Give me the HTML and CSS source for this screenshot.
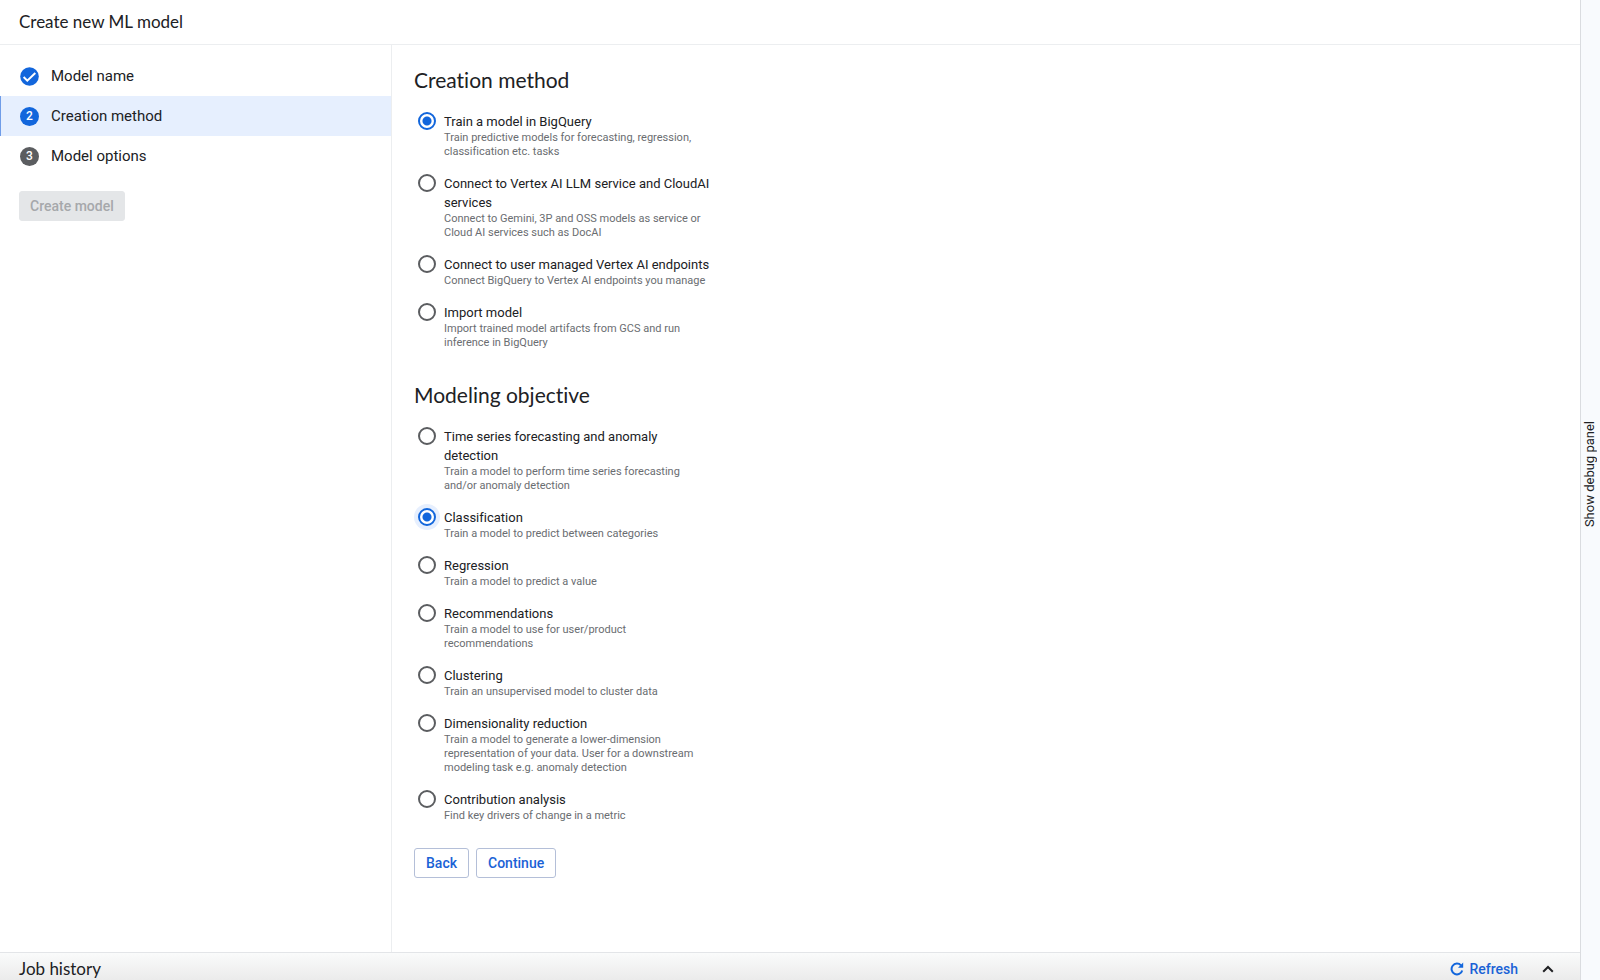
FILE: index.html
```
<!DOCTYPE html>
<html lang="en">
<head>
  <meta charset="utf-8">
  <title>Create new ML model</title>
  <link rel="stylesheet" href="styles.css">
</head>
<body>
  <div class="workspace">
    <header class="header">
      <h1 class="header-title">Create new ML model</h1>
    </header>

    <div class="content">
      <nav class="sidebar">
        <ol class="steps">
          <li class="step">
            <svg class="step-icon" viewBox="0 0 19 19" aria-hidden="true">
              <circle cx="9.5" cy="9.5" r="9.3" fill="#1266dc"/>
              <path d="M3.6 10l3.7 3.6 8-7.6" fill="none" stroke="#fff" stroke-width="2"/>
            </svg>
            <a class="step-link" href="#name">Model name</a>
          </li>
          <li class="step active">
            <span class="step-number">2</span>
            <a class="step-link" href="#method" aria-current="step">Creation method</a>
          </li>
          <li class="step">
            <span class="step-number pending">3</span>
            <a class="step-link" href="#options">Model options</a>
          </li>
        </ol>
        <button class="button create-button" type="button" disabled>Create model</button>
      </nav>

      <main class="main">
        <form class="form">
          <fieldset class="group">
            <legend class="group-title">Creation method</legend>
            <div class="option">
              <input class="radio" type="radio" name="method" id="train" checked>
              <label class="option-text" for="train">
                <span class="option-label">Train a model in BigQuery</span>
                <span class="option-description">Train predictive models for forecasting, regression, classification etc. tasks</span>
              </label>
            </div>
            <div class="option">
              <input class="radio" type="radio" name="method" id="llm">
              <label class="option-text" for="llm">
                <span class="option-label">Connect to Vertex AI LLM service and CloudAI services</span>
                <span class="option-description">Connect to Gemini, 3P and OSS models as service or Cloud AI services such as DocAI</span>
              </label>
            </div>
            <div class="option">
              <input class="radio" type="radio" name="method" id="endpoints">
              <label class="option-text" for="endpoints">
                <span class="option-label">Connect to user managed Vertex AI endpoints</span>
                <span class="option-description">Connect BigQuery to Vertex AI endpoints you manage</span>
              </label>
            </div>
            <div class="option">
              <input class="radio" type="radio" name="method" id="import">
              <label class="option-text" for="import">
                <span class="option-label">Import model</span>
                <span class="option-description">Import trained model artifacts from GCS and run inference in BigQuery</span>
              </label>
            </div>
          </fieldset>

          <fieldset class="group">
            <legend class="group-title">Modeling objective</legend>
            <div class="option">
              <input class="radio" type="radio" name="objective" id="forecasting">
              <label class="option-text" for="forecasting">
                <span class="option-label">Time series forecasting and anomaly detection</span>
                <span class="option-description">Train a model to perform time series forecasting and/or anomaly detection</span>
              </label>
            </div>
            <div class="option">
              <input class="radio focused" type="radio" name="objective" id="classification" checked>
              <label class="option-text" for="classification">
                <span class="option-label">Classification</span>
                <span class="option-description">Train a model to predict between categories</span>
              </label>
            </div>
            <div class="option">
              <input class="radio" type="radio" name="objective" id="regression">
              <label class="option-text" for="regression">
                <span class="option-label">Regression</span>
                <span class="option-description">Train a model to predict a value</span>
              </label>
            </div>
            <div class="option">
              <input class="radio" type="radio" name="objective" id="recommendations">
              <label class="option-text" for="recommendations">
                <span class="option-label">Recommendations</span>
                <span class="option-description">Train a model to use for user/product recommendations</span>
              </label>
            </div>
            <div class="option">
              <input class="radio" type="radio" name="objective" id="clustering">
              <label class="option-text" for="clustering">
                <span class="option-label">Clustering</span>
                <span class="option-description">Train an unsupervised model to cluster data</span>
              </label>
            </div>
            <div class="option">
              <input class="radio" type="radio" name="objective" id="reduction">
              <label class="option-text" for="reduction">
                <span class="option-label">Dimensionality reduction</span>
                <span class="option-description">Train a model to generate a lower-dimension representation of your data. User for a downstream modeling task e.g. anomaly detection</span>
              </label>
            </div>
            <div class="option">
              <input class="radio" type="radio" name="objective" id="contribution">
              <label class="option-text" for="contribution">
                <span class="option-label">Contribution analysis</span>
                <span class="option-description">Find key drivers of change in a metric</span>
              </label>
            </div>
          </fieldset>

          <div class="actions">
            <button class="button" type="button">Back</button>
            <button class="button" type="button">Continue</button>
          </div>
        </form>
      </main>
    </div>

    <footer class="footer">
      <h2 class="footer-title">Job history</h2>
      <button class="refresh" type="button">
        <svg class="refresh-icon" viewBox="0 0 14 14" aria-hidden="true">
          <path d="M11 3.4A5.4 5.4 0 1 0 12.2 8.4" fill="none" stroke="#1266dc" stroke-width="2"/>
          <path d="M13.2 .6v5.2H8z" fill="#1266dc"/>
        </svg>
        Refresh
      </button>
      <button class="expand" type="button" aria-label="Expand">
        <svg class="expand-icon" viewBox="0 0 12 8" aria-hidden="true">
          <path d="M1.2 6.8L6 2l4.8 4.8" fill="none" stroke="#202124" stroke-width="2"/>
        </svg>
      </button>
    </footer>
  </div>

  <aside class="rail">
    <button class="debug-button" type="button">Show debug panel</button>
  </aside>
</body>
</html>
```
FILE: styles.css
```
* {
  box-sizing: border-box;
}
body {
  margin: 0;
  height: 100vh;
  display: flex;
  overflow: hidden;
  font-family: Roboto, sans-serif;
  font-variant-ligatures: none;
  color: #202124;
  background-color: #fff;
}
button {
  font-family: Roboto, sans-serif;
}
.workspace {
  flex: 1;
  display: flex;
  flex-direction: column;
}
.header {
  padding: 10px 19px;
  border-bottom: 1px solid #eceef0;
}
.header-title {
  margin: 0;
  font-family: Lato, sans-serif;
  font-size: 17px;
  font-weight: 400;
  line-height: 24px;
}
.content {
  flex: 1;
  display: flex;
  min-height: 0;
}

/* steps */
.sidebar {
  width: 392px;
  padding-top: 11px;
  border-right: 1px solid #eceef0;
}
.steps {
  list-style: none;
  margin: 0;
  padding: 0;
}
.step {
  display: flex;
  align-items: center;
  gap: 12px;
  height: 40px;
  padding-left: 19px;
  border-left: 1px solid transparent;
}
.step.active {
  background-color: #e6effe;
  border-left-color: #6f9ce8;
}
.step-icon {
  width: 19px;
  height: 19px;
}
.step-number {
  width: 19px;
  height: 19px;
  border-radius: 50%;
  background-color: #1266dc;
  color: #fff;
  font-size: 12px;
  font-weight: 500;
  line-height: 19px;
  text-align: center;
}
.step-number.pending {
  background-color: #5b5d60;
}
.step-link {
  color: #202124;
  font-size: 15px;
  text-decoration: none;
}

/* buttons */
.button {
  height: 30px;
  padding: 0 11px;
  border: 1px solid #b4bfd8;
  border-radius: 3px;
  background-color: #fff;
  color: #1a62d6;
  font-size: 14px;
  font-weight: 500;
}
.create-button {
  margin: 15px 19px;
  padding: 0 10px;
  border-color: #e4e6e8;
  background-color: #e4e6e8;
  color: #a6a8ab;
}

/* form */
.main {
  flex: 1;
  padding: 21px 22px;
}
.group {
  margin: 0 0 10px;
  padding: 0;
  border: 0;
}
.group + .group {
  margin-top: 16px;
}
.group-title {
  margin-bottom: 18px;
  padding: 0;
  font-family: Lato, sans-serif;
  font-size: 21px;
  line-height: 28px;
}
.option {
  display: flex;
  gap: 8px;
  margin-bottom: 15px;
  padding-left: 4px;
}
.radio {
  appearance: none;
  width: 18px;
  height: 18px;
  margin: 0;
  border: 2px solid #5b5d60;
  border-radius: 50%;
}
.radio:checked {
  border-color: #1266dc;
  background: radial-gradient(#1266dc 4px, #fff 5px);
}
.radio.focused {
  box-shadow: 0 0 0 4px #e6effe;
}
.option-text {
  width: 266px;
}
.option-label {
  display: block;
  font-size: 13px;
  line-height: 19px;
}
.option-description {
  display: block;
  color: #6a6d71;
  font-size: 11px;
  line-height: 14px;
}
.actions {
  display: flex;
  gap: 7px;
}

/* job history */
.footer {
  display: flex;
  align-items: center;
  height: 28px;
  padding: 4px 18px 0 19px;
  border-top: 1px solid #e3e5e8;
  background: linear-gradient(#fafbfb, #ebebeb);
}
.footer-title {
  flex: 1;
  margin: 0;
  font-family: Lato, sans-serif;
  font-size: 17px;
  font-weight: 400;
  line-height: 24px;
}
.refresh {
  display: flex;
  align-items: center;
  gap: 5px;
  margin-right: 16px;
  padding: 0;
  border: 0;
  background: none;
  color: #1a62d6;
  font-size: 14px;
  font-weight: 500;
}
.refresh-icon {
  width: 14px;
  height: 14px;
}
.expand {
  display: flex;
  padding: 8px;
  border: 0;
  background: none;
}
.expand-icon {
  width: 12px;
  height: 8px;
}

/* debug rail */
.rail {
  display: flex;
  align-items: center;
  justify-content: center;
  width: 20px;
  padding: 0 3px 32px 0;
  border-left: 1px solid #dadce0;
  background-color: #f8fafd;
}
.debug-button {
  padding: 0;
  border: 0;
  background: none;
  color: #202124;
  font-size: 13px;
  writing-mode: vertical-rl;
  transform: rotate(180deg);
}
```
